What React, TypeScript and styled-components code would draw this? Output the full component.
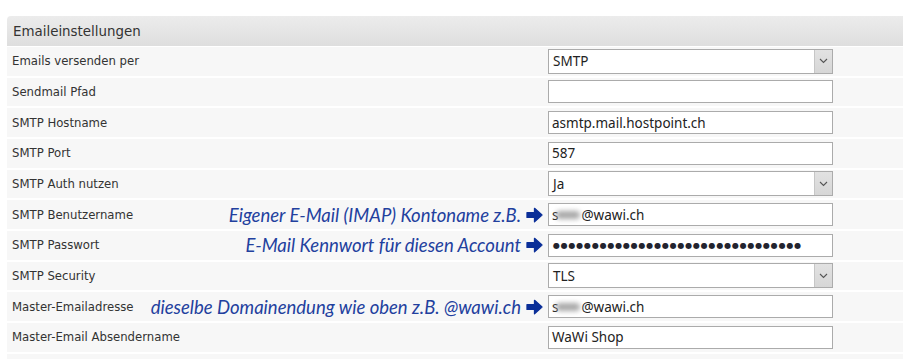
import React from "react";
import styled, { createGlobalStyle } from "styled-components";

const Global = createGlobalStyle`
  html, body { margin: 0; padding: 0; background: #ffffff; }
  body { font-family: "DejaVu Sans", Verdana, sans-serif; }
`;

const Page = styled.div`
  padding: 16px 0 0 7px;
`;

const Panel = styled.section`
  display: flex;
  flex-direction: column;
`;

const Header = styled.h2`
  margin: 0;
  height: 30px;
  display: flex;
  align-items: center;
  padding-left: 6px;
  font-family: "DejaVu Sans", Verdana, sans-serif;
  font-weight: normal;
  font-size: 13.4px;
  color: #333;
  border-top-left-radius: 4px;
  background: linear-gradient(#ececec, #dedede);
  border-bottom: 1px solid #ffffff;
`;

const Row = styled.div`
  display: grid;
  grid-template-columns: 541px 285px 1fr;
  align-items: center;
  height: 28.67px;
  background: #f7f7f7;
  border-bottom: 2px solid #ffffff;
  &:last-of-type {
    border-bottom: 1px solid #d9d9d9;
    height: 29.67px;
  }
`;

const Footer = styled.div`
  height: 8px;
  background: #f7f7f7;
`;

const LabelCell = styled.div`
  display: flex;
  align-items: center;
  padding: 0 5px 0 5px;
  min-width: 0;
`;

const Label = styled.label`
  font-family: "DejaVu Sans", Verdana, sans-serif;
  font-size: 11.7px;
  color: #333;
  white-space: nowrap;
`;

const Note = styled.span`
  margin-left: auto;
  display: flex;
  align-items: center;
  gap: 5px;
  font-family: Lato, "Open Sans", sans-serif;
  font-style: italic;
  font-size: 18.5px;
  color: #22409e;
  white-space: nowrap;
`;

const Arrow = () => (
  <svg width="17" height="16" viewBox="0 0 17 16" aria-hidden="true">
    <path
      d="M1 5.6 H8.5 V1.3 L16 8 L8.5 14.7 V10.4 H1 Z"
      fill="#0b2f98"
      stroke="#0b2f98"
      strokeWidth="1.3"
      strokeLinejoin="round"
    />
  </svg>
);

const FieldBox = styled.div<{ $tall?: boolean }>`
  box-sizing: border-box;
  height: ${(p) => (p.$tall ? "25px" : "23px")};
  border: 1px solid #ababab;
  background: #fff;
  display: flex;
  align-items: center;
  padding-left: 3px;
  font-family: "Noto Sans", "Open Sans", sans-serif;
  font-size: 13.5px;
  color: #222;
  overflow: hidden;
`;

const SelectText = styled.span`
  padding-left: 1px;
  flex: 1;
`;

const DropButton = styled.span`
  width: 17px;
  align-self: stretch;
  background: linear-gradient(#e2e2e2, #d6d6d6);
  border-left: 1px solid #c6c6c6;
  display: flex;
  align-items: center;
  justify-content: center;
`;

const Chevron = () => (
  <svg width="9" height="6" viewBox="0 0 9 6" aria-hidden="true">
    <path d="M1 1 L4.5 4.5 L8 1" fill="none" stroke="#555" strokeWidth="1.1" />
  </svg>
);

const Blur = styled.span`
  display: inline-block;
  width: 24px;
  height: 8px;
  margin: 0 1px 0 -2px;
  background: #a8a8a8;
  border-radius: 5px;
  filter: blur(2.4px);
`;

const Dots = styled.span`
  letter-spacing: 0.8px;
  font-family: "DejaVu Sans", sans-serif;
  font-size: 8px;
  color: #23232e;
  padding-left: 1px;
`;

type Field =
  | { kind: "select"; value: string }
  | { kind: "text"; value: string }
  | { kind: "masked"; value: string }
  | { kind: "password"; count: number };

type RowDef = {
  label: string;
  note?: string;
  field: Field;
};

const rows: RowDef[] = [
  { label: "Emails versenden per", field: { kind: "select", value: "SMTP" } },
  { label: "Sendmail Pfad", field: { kind: "text", value: "" } },
  { label: "SMTP Hostname", field: { kind: "text", value: "asmtp.mail.hostpoint.ch" } },
  { label: "SMTP Port", field: { kind: "text", value: "587" } },
  { label: "SMTP Auth nutzen", field: { kind: "select", value: "Ja" } },
  {
    label: "SMTP Benutzername",
    note: "Eigener E-Mail (IMAP) Kontoname z.B.",
    field: { kind: "masked", value: "@wawi.ch" },
  },
  {
    label: "SMTP Passwort",
    note: "E-Mail Kennwort für diesen Account",
    field: { kind: "password", count: 32 },
  },
  { label: "SMTP Security", field: { kind: "select", value: "TLS" } },
  {
    label: "Master-Emailadresse",
    note: "dieselbe Domainendung wie oben z.B. @wawi.ch",
    field: { kind: "masked", value: "@wawi.ch" },
  },
  { label: "Master-Email Absendername", field: { kind: "text", value: "WaWi Shop" } },
];

const renderField = (f: Field) => {
  switch (f.kind) {
    case "select":
      return (
        <FieldBox $tall>
          <SelectText>{f.value}</SelectText>
          <DropButton>
            <Chevron />
          </DropButton>
        </FieldBox>
      );
    case "text":
      return <FieldBox>{f.value}</FieldBox>;
    case "masked":
      return (
        <FieldBox>
          s<Blur />
          {f.value}
        </FieldBox>
      );
    case "password":
      return (
        <FieldBox>
          <Dots>{"●".repeat(f.count)}</Dots>
        </FieldBox>
      );
  }
};

export default function App() {
  return (
    <>
      <Global />
      <Page>
        <Panel>
          <Header>Emaileinstellungen</Header>
          {rows.map((r) => (
            <Row key={r.label}>
              <LabelCell>
                <Label>{r.label}</Label>
                {r.note && (
                  <Note>
                    {r.note}
                    <Arrow />
                  </Note>
                )}
              </LabelCell>
              {renderField(r.field)}
              <span />
            </Row>
          ))}
          <Footer />
        </Panel>
      </Page>
    </>
  );
}
